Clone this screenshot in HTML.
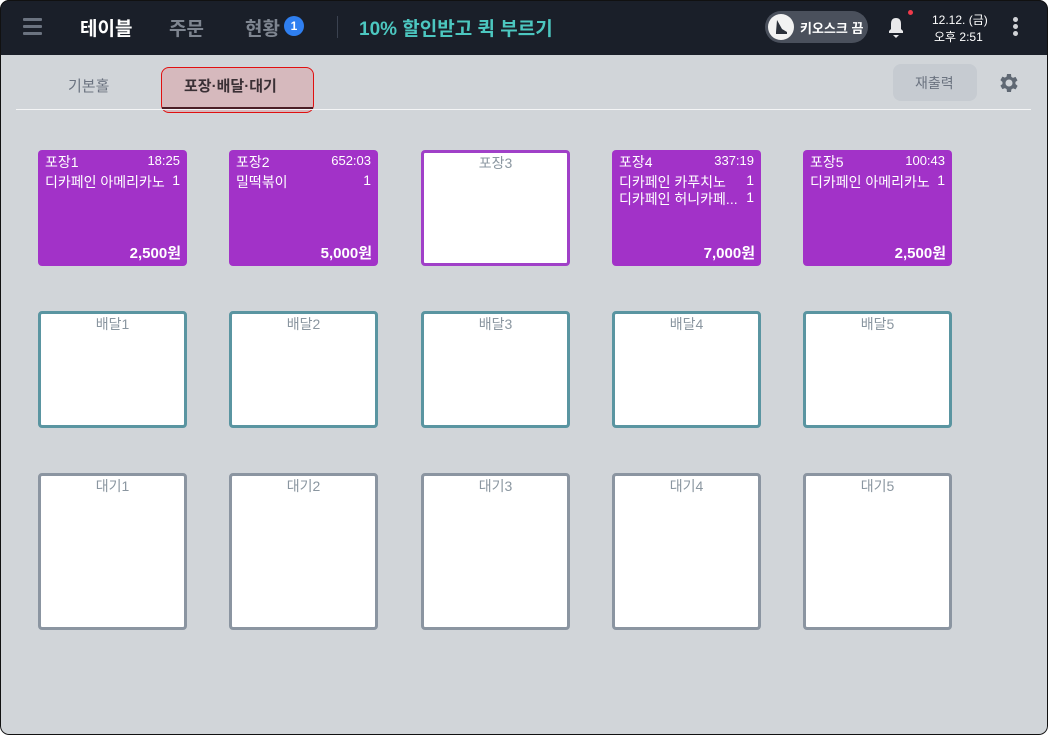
<!DOCTYPE html>
<html><head><meta charset="utf-8"><style>
*{box-sizing:border-box;margin:0;padding:0}
html,body{width:1048px;height:735px;overflow:hidden;background:#fff}
body{font-family:"Liberation Sans","Noto Sans CJK KR",sans-serif}
.frame{position:absolute;left:0;top:0;width:1048px;height:735px;border-radius:9px;overflow:hidden;background:#d1d5d9}
.bd{position:absolute;left:0;top:0;width:1048px;height:735px;border:1px solid #111;border-radius:9px;z-index:5}
.hdr{position:absolute;left:0;top:0;width:1048px;height:55px;background:#1a1f29}
.t{position:absolute;white-space:nowrap}
.card{position:absolute;width:149px;border-radius:4px}
.p{background:#a232c8;color:#fff;height:116px;top:150px}
.p .n{position:absolute;left:7px;top:2px;font-size:14px}
.p .tm{position:absolute;right:7px;top:3px;font-size:13px}
.p .l{position:absolute;left:7px;right:7px;font-size:14px;display:flex;justify-content:space-between}
.p .pr{position:absolute;right:6px;bottom:3px;font-size:15px;font-weight:bold}
.e{background:#fff;border:3px solid #8b95a1;text-align:center;color:#8a96a0;font-size:14px;padding-top:0}
.d{border-color:#5a95a1;top:311px;height:117px}
.w{top:473px;height:157px}
</style></head><body><div class="frame">
<div class="hdr">
 <div style="position:absolute;left:23px;top:18px;width:19px;height:3px;background:#6b7380;box-shadow:0 7px 0 #6b7380,0 14px 0 #6b7380;border-radius:1px"></div>
 <div class="t" style="left:80px;top:14px;font-size:19px;font-weight:bold;color:#fff">테이블</div>
 <div class="t" style="left:169px;top:14px;font-size:19px;font-weight:bold;color:#7e8590">주문</div>
 <div class="t" style="left:245px;top:14px;font-size:19px;font-weight:bold;color:#7e8590">현황</div>
 <div style="position:absolute;left:284px;top:16px;width:20px;height:20px;border-radius:50%;background:#2f7ff0;color:#fff;font-size:12px;font-weight:bold;text-align:center;line-height:20px">1</div>
 <div style="position:absolute;left:337px;top:16px;width:1px;height:22px;background:#3b4250"></div>
 <div class="t" style="left:359px;top:14px;font-size:19px;font-weight:bold;color:#4cc7c0">10% 할인받고 퀵 부르기</div>
 <div style="position:absolute;left:765px;top:11px;width:103px;height:32px;border-radius:16px;background:#4a505c"></div>
 <div style="position:absolute;left:768px;top:14px;width:26px;height:26px;border-radius:50%;background:#f2f2f2"></div>
 <svg style="position:absolute;left:768px;top:14px" width="26" height="26"><path d="M9 6 L14 15 L19 18 L19 20 L8 20 L8 18 Z" fill="#2b303a"/></svg>
 <div class="t" style="left:800px;top:18px;font-size:13px;font-weight:bold;color:#fff">키오스크 끔</div>
 <svg style="position:absolute;left:885px;top:15px" width="22" height="24"><path d="M4 18 L4 16 L6 14 L6 9 Q6 3 11 3 Q16 3 16 9 L16 14 L18 16 L18 18 Z" fill="#e8e8ea"/><path d="M8 20 L14 20 L11 23 Z" fill="#e8e8ea"/></svg>
 <div style="position:absolute;left:908px;top:10px;width:5px;height:5px;border-radius:50%;background:#f03a4a"></div>
 <div class="t" style="left:932px;top:11px;font-size:12px;color:#fff">12.12. (금)</div>
 <div class="t" style="left:934px;top:28px;font-size:12px;color:#fff">오후 2:51</div>
 <div style="position:absolute;left:1013px;top:17px;width:5px;height:5px;border-radius:50%;background:#d0d2d6;box-shadow:0 7px 0 #d0d2d6,0 14px 0 #d0d2d6"></div>
</div>
<div class="t" style="left:68px;top:75px;font-size:15px;color:#6b7380">기본홀</div>
<div style="position:absolute;left:161px;top:67px;width:153px;height:46px;border:1px solid #e01010;border-radius:8px;background:#d6b9bd"></div>
<div style="position:absolute;left:162px;top:107px;width:151px;height:3px;background:#4b1e26"></div>
<div class="t" style="left:184px;top:75px;font-size:15px;font-weight:bold;color:#3a3035">포장·배달·대기</div>
<div style="position:absolute;left:16px;top:109px;width:1015px;height:1px;background:#f4f5f6"></div>
<div style="position:absolute;left:893px;top:64px;width:84px;height:37px;border-radius:8px;background:#c6cbd1"></div>
<div class="t" style="left:915px;top:73px;font-size:14px;color:#6b7380">재출력</div>
<svg style="position:absolute;left:997px;top:71px" width="24" height="24" viewBox="0 0 24 24"><path fill="#5f6873" d="M19.4 13a7.5 7.5 0 0 0 0-2l2.1-1.6-2-3.5-2.5 1a7 7 0 0 0-1.7-1L15 3h-4l-.4 2.6a7 7 0 0 0-1.7 1l-2.5-1-2 3.5L6.5 11a7.5 7.5 0 0 0 0 2l-2.1 1.6 2 3.5 2.5-1a7 7 0 0 0 1.7 1L11 21h4l.4-2.6a7 7 0 0 0 1.7-1l2.5 1 2-3.5zM13 15.5a3.5 3.5 0 1 1 0-7 3.5 3.5 0 0 1 0 7z" transform="translate(-1 0)"/></svg>

<div class="card p" style="left:38px"><span class="n">포장1</span><span class="tm">18:25</span><div class="l" style="top:22px"><span>디카페인 아메리카노</span><span>1</span></div><span class="pr">2,500원</span></div>
<div class="card p" style="left:229px"><span class="n">포장2</span><span class="tm">652:03</span><div class="l" style="top:22px"><span>밀떡볶이</span><span>1</span></div><span class="pr">5,000원</span></div>
<div class="card e" style="left:421px;top:150px;height:116px;border-color:#a040c8">포장3</div>
<div class="card p" style="left:612px"><span class="n">포장4</span><span class="tm">337:19</span><div class="l" style="top:22px"><span>디카페인 카푸치노</span><span>1</span></div><div class="l" style="top:39px"><span>디카페인 허니카페...</span><span>1</span></div><span class="pr">7,000원</span></div>
<div class="card p" style="left:803px"><span class="n">포장5</span><span class="tm">100:43</span><div class="l" style="top:22px"><span>디카페인 아메리카노</span><span>1</span></div><span class="pr">2,500원</span></div>

<div class="card e d" style="left:38px">배달1</div>
<div class="card e d" style="left:229px">배달2</div>
<div class="card e d" style="left:421px">배달3</div>
<div class="card e d" style="left:612px">배달4</div>
<div class="card e d" style="left:803px">배달5</div>

<div class="card e w" style="left:38px">대기1</div>
<div class="card e w" style="left:229px">대기2</div>
<div class="card e w" style="left:421px">대기3</div>
<div class="card e w" style="left:612px">대기4</div>
<div class="card e w" style="left:803px">대기5</div>
<div class="bd"></div>
</div></body></html>
